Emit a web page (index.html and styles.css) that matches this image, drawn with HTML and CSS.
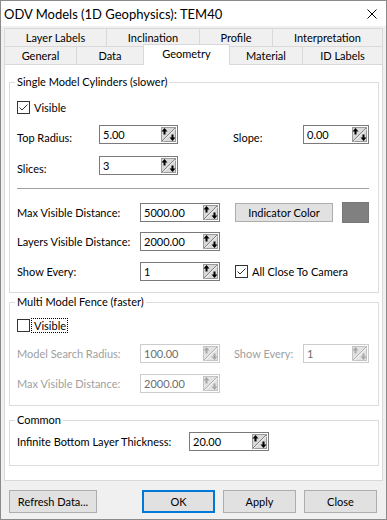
FILE: index.html
```html
<!DOCTYPE html>
<html>
<head>
<meta charset="utf-8">
<link rel="stylesheet" href="styles.css">
</head>
<body>
<svg class="defs" aria-hidden="true">
  <symbol id="spin" viewBox="0 0 15 15">
    <rect x="0.5" y="0.5" width="14" height="14" fill="#d9d9d9" stroke="#9a9a9a"/>
    <path d="M1 14 L14 1" stroke="#808080"/>
    <path d="M2 14.5 L14.5 2" stroke="#f4f4f4"/>
    <path d="M3.5 1 L6.5 4.5 L0.5 4.5 Z" fill="#000"/>
    <rect x="2.5" y="4" width="2" height="3.5" fill="#000"/>
    <path d="M11.5 14 L8.5 10.5 L14.5 10.5 Z" fill="#000"/>
    <rect x="10.5" y="7.5" width="2" height="3.5" fill="#000"/>
  </symbol>
  <symbol id="spin-dis" viewBox="0 0 15 15">
    <rect x="0.5" y="0.5" width="14" height="14" fill="#e3e3e3" stroke="#c4c4c4"/>
    <path d="M1 14 L14 1" stroke="#b0b0b0"/>
    <path d="M2 14.5 L14.5 2" stroke="#f8f8f8"/>
    <path d="M3.5 1 L6.5 4.5 L0.5 4.5 Z" fill="#a8a8a8"/>
    <rect x="2.5" y="4" width="2" height="3.5" fill="#a8a8a8"/>
    <path d="M11.5 14 L8.5 10.5 L14.5 10.5 Z" fill="#a8a8a8"/>
    <rect x="10.5" y="7.5" width="2" height="3.5" fill="#a8a8a8"/>
  </symbol>
  <symbol id="cb-on" viewBox="0 0 13 13">
    <rect x="0.5" y="0.5" width="12" height="12" fill="#fff" stroke="#333"/>
    <path d="M2.5 6.5 L5 9 L10.5 3.5" fill="none" stroke="#333"/>
  </symbol>
  <symbol id="cb-off" viewBox="0 0 13 13">
    <rect x="0.5" y="0.5" width="12" height="12" fill="#fff" stroke="#333"/>
  </symbol>
</svg>

<div class="window">
  <div class="titlebar">
    <span class="title">ODV Models (1D Geophysics): TEM40</span>
    <svg class="close" width="10" height="10" viewBox="0 0 10 10"><path d="M0.5 0.5 L9.5 9.5 M9.5 0.5 L0.5 9.5" stroke="#000" stroke-width="1" fill="none"/></svg>
  </div>

  <div class="client">
    <div class="tabs">
      <div class="tabrow row1">
        <div class="tab t1a">Layer Labels</div>
        <div class="tab t1b">Inclination</div>
        <div class="tab t1c">Profile</div>
        <div class="tab t1d">Interpretation</div>
      </div>
      <div class="tabrow row2">
        <div class="tab t2a">General</div>
        <div class="tab t2b">Data</div>
        <div class="tab t2c selected">Geometry</div>
        <div class="tab t2d">Material</div>
        <div class="tab t2e">ID Labels</div>
      </div>
    </div>

    <div class="panel">
      <fieldset class="group g1">
        <legend>Single Model Cylinders (slower)</legend>
        <div class="row chkrow g1r1">
          <svg class="cb"><use href="#cb-on"/></svg>
          <span class="cblabel">Visible</span>
        </div>
        <div class="row g1r2">
          <span class="lbl low w82">Top Radius:</span>
          <span class="input w79"><span class="val">5.00</span><svg class="spin"><use href="#spin"/></svg></span>
          <span class="right">
            <span class="lbl low w70">Slope:</span>
            <span class="input w66"><span class="val">0.00</span><svg class="spin"><use href="#spin"/></svg></span>
          </span>
        </div>
        <div class="row g1r3">
          <span class="lbl low w82">Slices:</span>
          <span class="input w79"><span class="val">3</span><svg class="spin"><use href="#spin"/></svg></span>
        </div>
        <div class="sep"></div>
        <div class="row g1r4">
          <span class="lbl w123">Max Visible Distance:</span>
          <span class="input w80"><span class="val">5000.00</span><svg class="spin"><use href="#spin"/></svg></span>
          <span class="right">
            <span class="btn ind">Indicator Color</span>
            <span class="swatch"></span>
          </span>
        </div>
        <div class="row g1r5">
          <span class="lbl w123">Layers Visible Distance:</span>
          <span class="input w80"><span class="val">2000.00</span><svg class="spin"><use href="#spin"/></svg></span>
        </div>
        <div class="row g1r6">
          <span class="lbl w123">Show Every:</span>
          <span class="input w80"><span class="val">1</span><svg class="spin"><use href="#spin"/></svg></span>
          <span class="camchk">
            <svg class="cb"><use href="#cb-on"/></svg>
            <span class="cblabel">All Close To Camera</span>
          </span>
        </div>
      </fieldset>

      <fieldset class="group g2">
        <legend>Multi Model Fence (faster)</legend>
        <div class="row chkrow g2r1">
          <svg class="cb"><use href="#cb-off"/></svg>
          <span class="cblabel focus">Visible</span>
        </div>
        <div class="row g2r2">
          <span class="lbl dis w123">Model Search Radius:</span>
          <span class="input dis w80"><span class="val">100.00</span><svg class="spin"><use href="#spin-dis"/></svg></span>
          <span class="right">
            <span class="lbl dis w69">Show Every:</span>
            <span class="input dis w66"><span class="val">1</span><svg class="spin"><use href="#spin-dis"/></svg></span>
          </span>
        </div>
        <div class="row g2r3">
          <span class="lbl dis w123">Max Visible Distance:</span>
          <span class="input dis w80"><span class="val">2000.00</span><svg class="spin"><use href="#spin-dis"/></svg></span>
        </div>
      </fieldset>

      <fieldset class="group g3">
        <legend>Common</legend>
        <div class="row g3r1">
          <span class="lbl w172">Infinite Bottom Layer Thickness:</span>
          <span class="input w80"><span class="val">20.00</span><svg class="spin"><use href="#spin"/></svg></span>
        </div>
      </fieldset>
    </div>

    <div class="buttons">
      <span class="btn refresh">Refresh Data...</span>
      <span class="btn default ok">OK</span>
      <span class="btn">Apply</span>
      <span class="btn">Close</span>
    </div>
  </div>
</div>
</body>
</html>
```

FILE: styles.css
```css
* { box-sizing: border-box; }

body {
  margin: 0;
  font-family: Lato, "Liberation Sans", sans-serif;
  font-size: 11px;
  color: #000;
  background: #fff;
}

.defs { position: absolute; width: 0; height: 0; overflow: hidden; }

.window {
  width: 387px;
  height: 520px;
  border: 1px solid #8a8a8a;
  background: #f0f0f0;
  display: flex;
  flex-direction: column;
}

.titlebar {
  height: 25px;
  flex: none;
  background: #fff;
  display: flex;
  align-items: center;
  padding: 0 9px 0 3px;
}
.title { font-size: 13px; }
.close { margin-left: auto; display: block; }

.client {
  flex: 1;
  padding: 2px 3px 0 3px;
  display: flex;
  flex-direction: column;
}

/* tabs */
.tabrow { display: flex; }
.tab {
  flex: none;
  height: 18px;
  line-height: 17px;
  border: 1px solid #d9d9d9;
  border-bottom: none;
  margin-left: -1px;
  background: #f0f0f0;
  text-align: center;
  white-space: nowrap;
}
.tab:first-child { margin-left: 0; }
.row2 { margin-top: -2px; height: 20px; align-items: flex-end; }
.tab.selected {
  height: 21px;
  margin-bottom: -1px;
  background: #fff;
  position: relative;
  z-index: 1;
}
.t1a { width: 103px; }
.t1b { width: 94px; }
.t1c { width: 74px; }
.t1d { width: 111px; }
.t2a { width: 73px; }
.t2b { width: 68px; }
.t2c { width: 87px; }
.t2d { width: 74px; }
.t2e { width: 81px; }

/* panel */
.panel {
  flex: none;
  height: 417px;
  border: 1px solid #d9d9d9;
  background: #fff;
  padding: 0 0 0 4px;
}

.group {
  margin: 0;
  width: 370px;
  min-width: 0;
  border: 1px solid #dcdcdc;
  padding: 0 9px 0 7px;
}
.group legend {
  padding: 0 2px;
  margin-left: -2px;
  line-height: 16px;
}
.group.g1 { margin-top: 9px; padding-bottom: 11px; }
.group.g2 { margin-top: 1px; padding-bottom: 12px; }
.group.g3 { margin-top: 6px; padding-bottom: 14px; }

.row {
  display: flex;
  align-items: center;
  height: 19px;
}
.row.chkrow { height: 13px; }

.row.g1r1 { margin-top: 11px; }
.row.g1r2 { margin-top: 11px; }
.row.g1r3 { margin-top: 12px; }
.sep { margin-top: 13px; height: 1px; background: #a0a0a0; }
.row.g1r4 { margin-top: 14px; }
.row.g1r5 { margin-top: 10px; }
.row.g1r6 { margin-top: 11px; }

.row.g2r1 { margin-top: 9px; }
.row.g2r2 { margin-top: 12px; }
.row.g2r3 { margin-top: 11px; }

.row.g3r1 { margin-top: 4px; }

.lbl { flex: none; white-space: nowrap; }
.lbl.low { padding-top: 6px; }
.lbl.dis { color: #a0a0a0; }
.w69 { width: 69px; }
.w70 { width: 70px; }
.w82 { width: 82px; }
.w123 { width: 123px; }
.w172 { width: 172px; }

.input {
  flex: none;
  height: 19px;
  border: 1px solid #7a7a7a;
  background: #fff;
  display: flex;
  align-items: center;
  padding: 0 1px 0 3px;
}
.input.dis { border-color: #cccccc; color: #6d6d6d; }
.input .val { flex: 1; white-space: nowrap; }
.w66 { width: 66px; }
.w79 { width: 79px; }
.w80 { width: 80px; }
.spin { width: 15px; height: 15px; flex: none; display: block; }

.right { margin-left: auto; display: flex; align-items: center; }

.cb { width: 13px; height: 13px; flex: none; display: block; }
.cblabel {
  margin-left: 1px;
  padding: 0 1px 0 2px;
  height: 15px;
  line-height: 13px;
  border: 1px dotted transparent;
  white-space: nowrap;
}
.cblabel.focus { border-color: #000; }

.camchk { display: flex; align-items: center; margin-left: 15px; }

.btn {
  flex: none;
  height: 19px;
  border: 1px solid #adadad;
  background: #e1e1e1;
  display: flex;
  align-items: center;
  justify-content: center;
  white-space: nowrap;
}
.ind { width: 98px; }
.swatch {
  width: 27px;
  height: 21px;
  margin-left: 9px;
  background: #808080;
  border: 1px solid #777;
}

.buttons {
  margin-top: 9px;
  display: flex;
  padding: 0 6px 0 5px;
  gap: 8px;
}
.buttons .btn { height: 23px; width: 73px; }
.buttons .refresh { width: 88px; }
.buttons .ok { margin-left: auto; }
.btn.default { border: 2px solid #0078d7; }
```
